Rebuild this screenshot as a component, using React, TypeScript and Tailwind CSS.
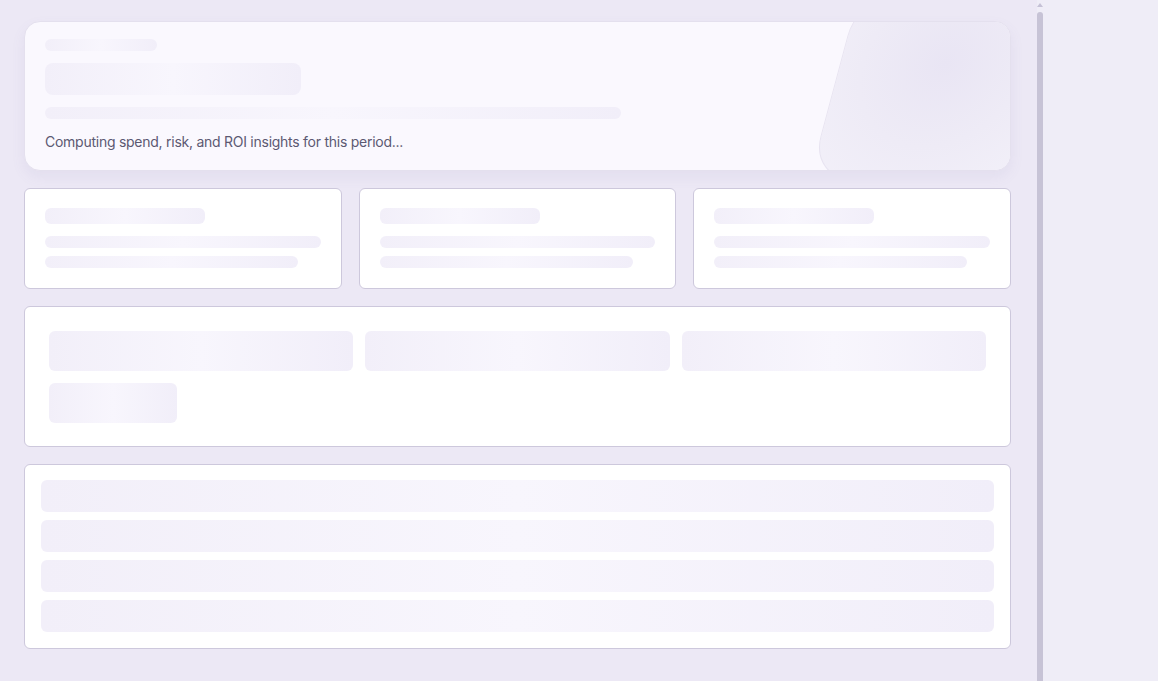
import React from 'react';

// Shimmer bar used for every loading placeholder
const Bone: React.FC<{ className?: string }> = ({ className = '' }) => (
  <div
    className={`bg-gradient-to-r from-[#f2eff9] via-[#f8f6fd] to-[#f1eef9] ${className}`}
  />
);

const KpiSkeleton: React.FC = () => (
  <div className="flex-1 basis-0 min-w-0 bg-white border border-[#cdc8dc] rounded-[6px] px-5 pt-[19px] h-[101px]">
    <Bone className="w-[160px] h-[16px] rounded-[6px]" />
    <Bone className="mt-[12px] w-[276px] max-w-full h-[12px] rounded-full" />
    <Bone className="mt-[8px] w-[253px] max-w-full h-[12px] rounded-full" />
  </div>
);

export default function App() {
  return (
    <div
      className="flex w-[1158px] h-[681px] overflow-hidden bg-[#efedf7]"
      style={{ fontFamily: 'Inter, "Noto Sans", sans-serif' }}
    >
      <main className="w-[1037px] h-full bg-[#ece8f5] pl-[24px] pr-[26px] pt-[21px] flex flex-col gap-[17px]">
        {/* Hero */}
        <section className="relative shrink-0 overflow-hidden h-[150px] rounded-[16px] bg-[#faf8fe] border border-[#e4e0ee] shadow-[0_6px_14px_rgba(120,100,170,0.08)] px-5 pt-[17px]">
          <div className="absolute top-[-30px] right-[-74px] w-[250px] h-[188px] rounded-[44px] skew-x-[-15deg] bg-[radial-gradient(circle_at_42%_38%,#e9e5f4_0%,#eeebf6_45%,#f4f2fa_100%)] border border-[#e8e4f1]" />
          <div className="relative">
            <Bone className="w-[112px] h-[12px] rounded-full" />
            <Bone className="mt-[12px] w-[256px] h-[32px] rounded-[8px]" />
            <Bone className="mt-[12px] w-[576px] h-[12px] rounded-full" />
            <p className="mt-[12px] text-[14px] text-[#5c5972] tracking-[-0.26px]">
              Computing spend, risk, and ROI insights for this period...
            </p>
          </div>
        </section>

        {/* KPI placeholders */}
        <div className="flex shrink-0 gap-[17px]">
          <KpiSkeleton />
          <KpiSkeleton />
          <KpiSkeleton />
        </div>

        {/* Filter / chip placeholders */}
        <section className="shrink-0 bg-white border border-[#cdc8dc] rounded-[6px] px-6 pt-6 pb-6 h-[141px]">
          <div className="grid grid-cols-3 gap-x-[12px] gap-y-[12px]">
            <Bone className="h-[40px] rounded-[6px]" />
            <Bone className="h-[40px] rounded-[6px]" />
            <Bone className="h-[40px] rounded-[6px]" />
            <Bone className="h-[40px] w-[128px] rounded-[6px]" />
          </div>
        </section>

        {/* Table rows */}
        <section className="shrink-0 bg-white border border-[#cdc8dc] rounded-[6px] px-4 pt-[15px] pb-4 flex flex-col gap-[8px]">
          {[0, 1, 2, 3].map((i) => (
            <Bone key={i} className="h-[32px] rounded-[6px]" />
          ))}
        </section>
      </main>

      {/* Scrollbar */}
      <div className="w-[6px] h-full flex flex-col items-center">
        <div className="mt-[3px] w-0 h-0 border-x-[3px] border-x-transparent border-b-[4px] border-b-[#c5c1d6]" />
        <div className="mt-[5px] flex-1 w-[6px] rounded-t-[3px] bg-[#c7c3d6]" />
      </div>

      {/* Side panel */}
      <aside className="flex-1 h-full bg-[#efedf7]" />
    </div>
  );
}
